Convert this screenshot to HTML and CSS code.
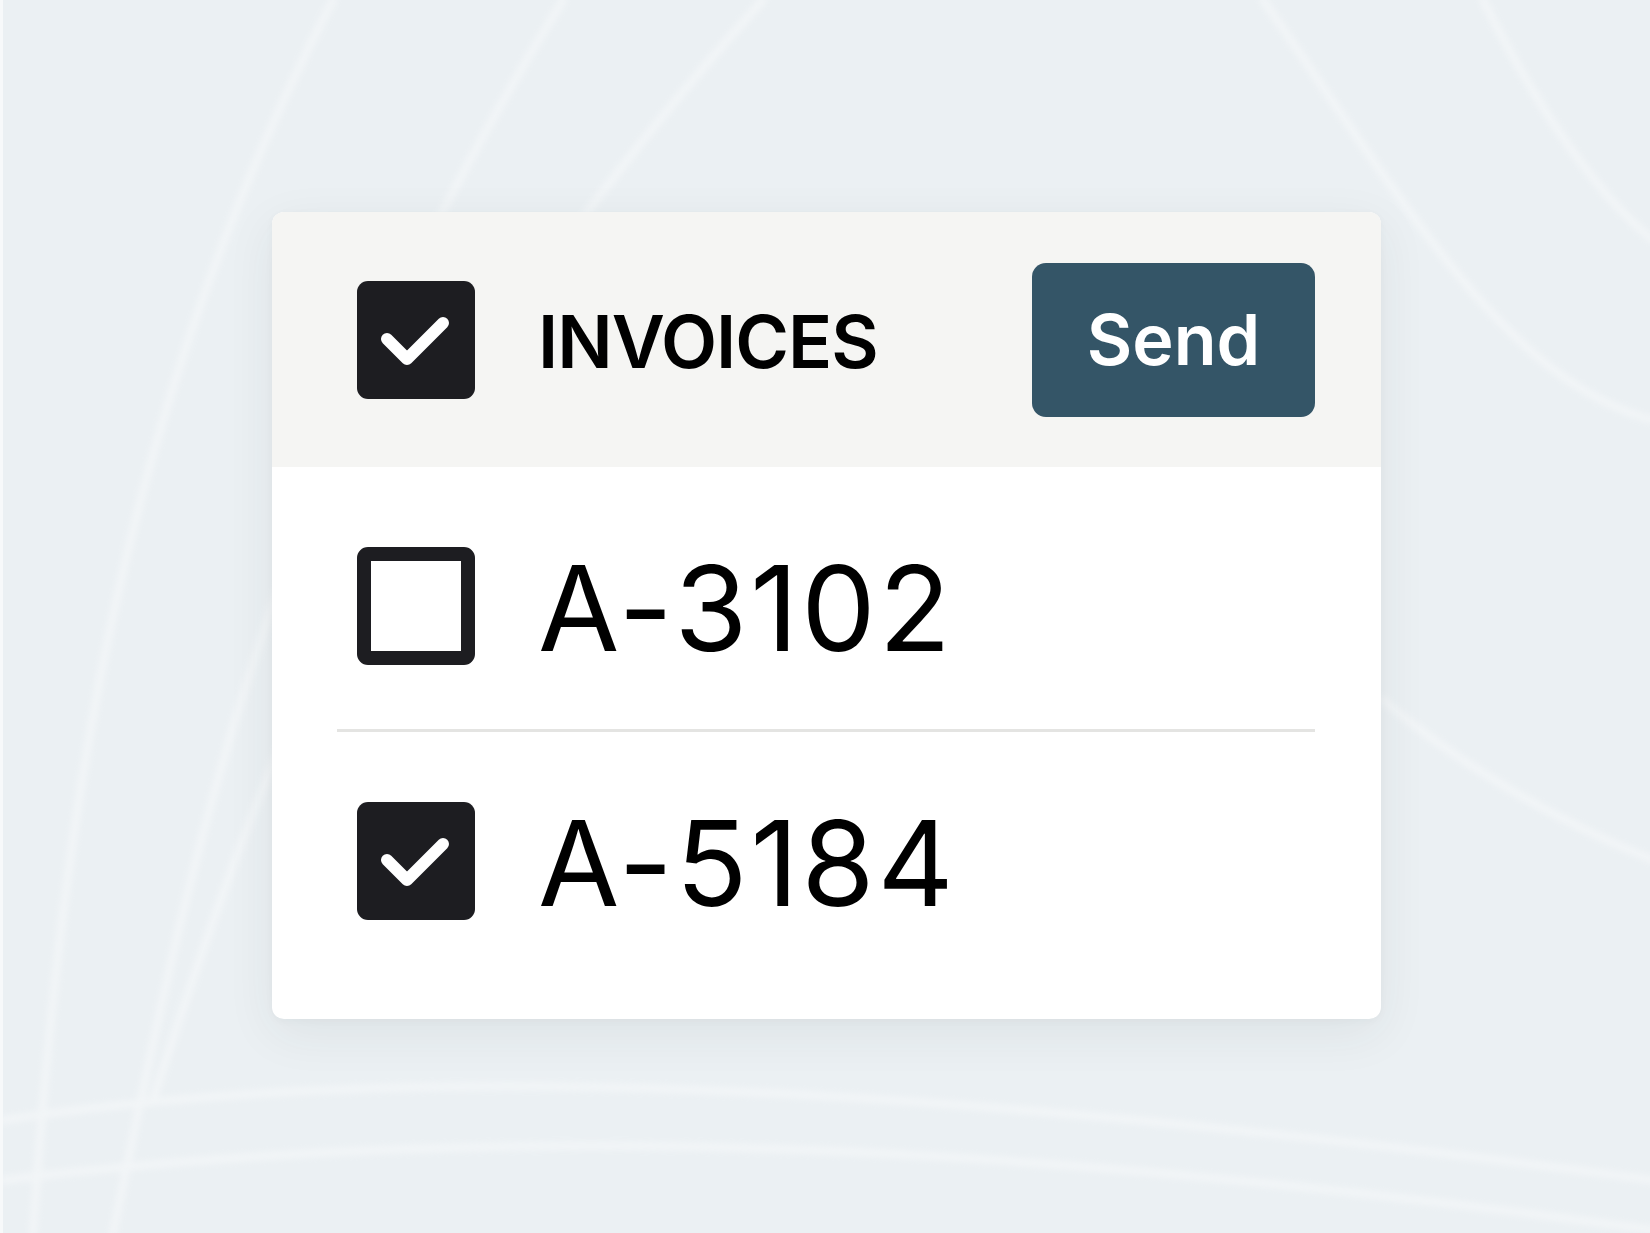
FILE: index.html
```html
<!DOCTYPE html>
<html lang="en">
<head>
<meta charset="utf-8">
<title>Invoices</title>
<link rel="stylesheet" href="styles.css">
</head>
<body>
<svg class="bg-waves" width="1650" height="1233" viewBox="0 0 1650 1233" aria-hidden="true">
  <defs>
    <filter id="soft" x="-10%" y="-10%" width="120%" height="120%">
      <feGaussianBlur stdDeviation="3"/>
    </filter>
  </defs>
  <g fill="none" stroke="#ffffff" stroke-width="8" stroke-linecap="round" opacity="0.35" filter="url(#soft)">
    <path d="M30 1233 C 60 800, 120 400, 330 0"/>
    <path d="M110 1233 C 180 900, 250 500, 560 0"/>
    <path d="M150 1100 C 260 760, 380 420, 760 0"/>
    <path d="M1260 0 C 1400 200, 1500 380, 1650 420"/>
    <path d="M1480 0 C 1540 120, 1600 200, 1650 240"/>
    <path d="M0 1120 C 400 1060, 900 1080, 1650 1180"/>
    <path d="M0 1180 C 500 1120, 1000 1140, 1650 1230"/>
    <path d="M1380 700 C 1450 760, 1550 820, 1650 860"/>
  </g>
</svg>
<main class="card">
  <header class="card-head">
    <span class="box box-checked" aria-label="checked">
      <svg viewBox="0 0 118 118" width="118" height="118"><path d="M30 58 L50 78 L86 42" fill="none" stroke="#fff" stroke-width="12" stroke-linecap="round" stroke-linejoin="round"/></svg>
    </span>
    <span class="title">INVOICES</span>
    <button class="send">Send</button>
  </header>
  <section class="card-body">
    <div class="row row-first">
      <span class="box box-empty" aria-label="unchecked"></span>
      <span class="code">A-3102</span>
    </div>
    <hr class="divider">
    <div class="row row-second">
      <span class="box box-checked" aria-label="checked">
        <svg viewBox="0 0 118 118" width="118" height="118"><path d="M30 58 L50 78 L86 42" fill="none" stroke="#fff" stroke-width="12" stroke-linecap="round" stroke-linejoin="round"/></svg>
      </span>
      <span class="code">A-5184</span>
    </div>
  </section>
</main>
</body>
</html>
```

FILE: styles.css
```css
html, body {
  margin: 0;
  padding: 0;
}
body {
  width: 1650px;
  height: 1233px;
  background: #ebf0f3;
  border-left: 3px solid #f7f9fa;
  box-sizing: border-box;
  font-family: Inter, "Noto Sans", "Liberation Sans", sans-serif;
  color: #000;
  position: relative;
  overflow: hidden;
  padding-top: 212px;
  padding-left: 269px;
}
.bg-waves {
  position: absolute;
  left: 0;
  top: 0;
  z-index: 0;
}
.card {
  position: relative;
  z-index: 1;
  width: 1109px;
  height: 807px;
  background: #ffffff;
  border-radius: 12px;
  overflow: hidden;
  box-shadow: 0 14px 50px rgba(40, 50, 60, 0.07), 0 2px 8px rgba(40, 50, 60, 0.03);
  display: flex;
  flex-direction: column;
}
.card-head {
  height: 255px;
  background: #f5f5f3;
  display: flex;
  align-items: center;
  padding: 0 66px 0 85px;
  box-sizing: border-box;
}
.box {
  width: 118px;
  height: 118px;
  border-radius: 11px;
  box-sizing: border-box;
  flex: none;
  display: block;
}
.box svg {
  display: block;
}
.box-checked {
  background: #1d1d21;
}
.box-empty {
  border: 14px solid #1d1d21;
  background: #ffffff;
}
.title {
  margin-left: 63px;
  margin-top: 3px;
  font-size: 73px;
  font-weight: 600;
  letter-spacing: -1px;
  line-height: 1;
  flex: 1;
}
.send {
  width: 283px;
  height: 154px;
  background: #345567;
  color: #ffffff;
  border: none;
  border-radius: 14px;
  font-family: inherit;
  font-size: 70px;
  font-weight: 600;
  padding: 0;
  line-height: 1;
}
.card-body {
  padding: 80px 66px 0 65px;
  display: flex;
  flex-direction: column;
}
.row {
  display: flex;
  align-items: center;
  padding-left: 20px;
}
.code {
  margin-left: 63px;
  margin-top: 2px;
  margin-bottom: -2px;
  font-size: 118px;
  font-weight: 400;
  line-height: 1;
  letter-spacing: 3px;
}
.divider {
  border: none;
  height: 3px;
  background: #e4e4e2;
  margin: 64px 0 70px 0;
}
```
